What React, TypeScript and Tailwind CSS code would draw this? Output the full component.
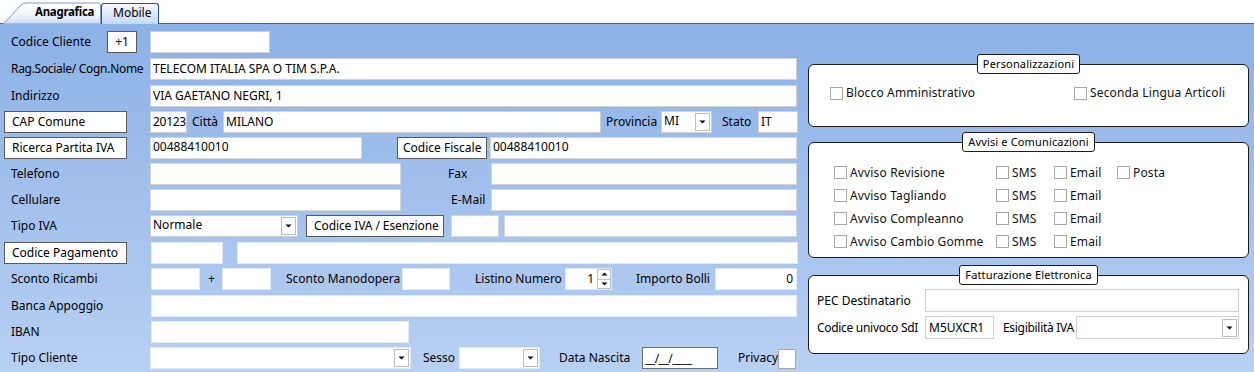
import React from 'react';

const FONT = "font-['Noto_Sans','Liberation_Sans',sans-serif]";

const Arrow = () => (
  <svg width="7" height="4" viewBox="0 0 7 4">
    <path d="M0.5 0.5h6L3.5 3.5z" fill="#000" />
  </svg>
);

const DropBtn = () => (
  <div className="w-[15px] h-[18px] border border-[#bdbdbd] bg-white flex items-center justify-center mr-[1px]">
    <Arrow />
  </div>
);

const Btn: React.FC<{ className: string; children: React.ReactNode }> = ({ className, children }) => (
  <div className={`h-[22px] bg-white border border-[#5a5a5a] flex items-center text-black ${className}`}>
    {children}
  </div>
);

const Box: React.FC<{ className: string; children?: React.ReactNode }> = ({ className, children }) => (
  <div className={`h-[22px] bg-white border flex items-center px-[2px] text-black ${className}`}>
    {children}
  </div>
);

const Select: React.FC<{ className: string; value?: string }> = ({ className, value }) => (
  <div className={`h-[22px] bg-white border border-[#d0d0d0] flex items-center justify-between pl-[2px] ${className}`}>
    <span className="-mt-[3px]">{value}</span>
    <DropBtn />
  </div>
);

const Check: React.FC<{ className?: string }> = ({ className }) => (
  <div className={`w-[13px] h-[13px] border border-[#a6a6a6] bg-white shrink-0 ${className ?? ''}`} />
);

const Label: React.FC<{ children: React.ReactNode; className?: string }> = ({ children, className }) => (
  <div className={`w-[150px] pl-[11px] whitespace-nowrap ${className ?? ''}`}>{children}</div>
);

const Legend: React.FC<{ children: React.ReactNode }> = ({ children }) => (
  <div className="self-center relative z-10 h-[20px] px-[5px] flex items-center bg-white border border-[#1c1c1c] rounded-[3px] whitespace-nowrap text-[11px] text-black">
    {children}
  </div>
);

const Tabs = () => (
  <div className="h-[24px] bg-white border-b border-[#3c629c] flex items-end">
    <div className="relative w-[99px] h-[24px] -mb-[1px] ml-[2px]">
      <svg className="absolute inset-0" width="99" height="24" viewBox="0 0 99 24">
        <defs>
          <linearGradient id="selTab" x1="0" y1="0" x2="0" y2="1">
            <stop offset="0" stopColor="#ffffff" />
            <stop offset="0.55" stopColor="#f3f7fd" />
            <stop offset="1" stopColor="#c6d9f3" />
          </linearGradient>
        </defs>
        <path d="M0.5 24 C8 18 14 10 19 5 Q21.5 3 24 3 H96 Q98.5 3 98.5 5.5 V24 Z" fill="url(#selTab)" stroke="#7f9cc6" strokeWidth="1" />
      </svg>
      <div className="relative h-full pl-[33px] pt-[4px] font-bold text-black text-[11.5px] tracking-[-0.3px]">Anagrafica</div>
    </div>
    <div className="h-[21px] w-[58px] -mb-[1px] border border-b-0 border-[#234f9c] rounded-t-[3px] bg-gradient-to-b from-[#f7fafe] to-[#c4d8f3] pl-[11px] pt-[1px] text-black">
      Mobile
    </div>
  </div>
);

export default function App() {
  return (
    <div className={`w-[1254px] h-[372px] overflow-hidden text-[12px] leading-[16px] ${FONT}`}>
      <Tabs />
      <div className="h-[348px] bg-gradient-to-b from-[#8cb1e6] to-[#b8d0f2] flex">
        {/* left form */}
        <div className="w-[800px] pt-[7px] flex flex-col gap-[4px] text-black">
          <div className="flex items-center h-[22px]">
            <div className="w-[107px] pl-[11px] whitespace-nowrap">Codice Cliente</div>
            <Btn className="w-[30px] justify-center">+1</Btn>
            <Box className="ml-[13px] w-[120px] border-[#d0d0d0]" />
          </div>
          <div className="flex items-center h-[22px] mt-[1px]">
            <Label className="tracking-[-0.3px]">Rag.Sociale/ Cogn.Nome</Label>
            <Box className="w-[647px] border-[#d0d0d0]">TELECOM ITALIA SPA O TIM S.P.A.</Box>
          </div>
          <div className="flex items-center h-[22px] mt-[1px]">
            <Label>Indirizzo</Label>
            <Box className="w-[647px] border-[#d0d0d0]">VIA GAETANO NEGRI, 1</Box>
          </div>
          <div className="flex items-center h-[22px]">
            <Btn className="ml-[4px] w-[123px] pl-[7px]">CAP Comune</Btn>
            <Box className="ml-[23px] w-[37px] border-[#d0d0d0] tracking-[-0.3px]">20123</Box>
            <div className="ml-[5px] w-[31px]">Città</div>
            <Box className="w-[378px] border-[#d0d0d0]">MILANO</Box>
            <div className="ml-[5px] w-[55px]">Provincia</div>
            <Select className="w-[51px]" value="MI" />
            <div className="ml-[10px] w-[36px]">Stato</div>
            <Box className="w-[40px] border-[#d0d0d0]">IT</Box>
          </div>
          <div className="flex items-center h-[22px]">
            <Btn className="ml-[4px] w-[123px] pl-[7px]">Ricerca Partita IVA</Btn>
            <Box className="ml-[23px] w-[212px] border-[#d6d6d6] items-start pt-[1px]">00488410010</Box>
            <Btn className="ml-[35px] w-[90px] pl-[5px]">Codice Fiscale</Btn>
            <Box className="ml-[3px] w-[307px] border-[#d6d6d6] items-start pt-[1px]">00488410010</Box>
          </div>
          <div className="flex items-center h-[22px]">
            <Label>Telefono</Label>
            <Box className="w-[251px] border-[#d6d6d6]" />
            <div className="w-[90px] pl-[47px]">Fax</div>
            <Box className="w-[306px] border-[#d6d6d6]" />
          </div>
          <div className="flex items-center h-[22px]">
            <Label>Cellulare</Label>
            <Box className="w-[251px] border-[#d6d6d6]" />
            <div className="w-[90px] pl-[50px]">E-Mail</div>
            <Box className="w-[306px] border-[#d6d6d6]" />
          </div>
          <div className="flex items-center h-[22px]">
            <Label>Tipo IVA</Label>
            <Select className="w-[148px]" value="Normale" />
            <Btn className="ml-[8px] w-[138px] pl-[7px] tracking-[-0.1px]">Codice IVA / Esenzione</Btn>
            <Box className="ml-[7px] w-[48px] border-[#d6d6d6]" />
            <Box className="ml-[5px] w-[293px] border-[#d6d6d6]" />
          </div>
          <div className="flex items-center h-[22px] mt-[1px]">
            <Btn className="ml-[4px] w-[123px] pl-[7px]">Codice Pagamento</Btn>
            <Box className="ml-[24px] w-[72px] border-[#e1eaf8]" />
            <Box className="ml-[14px] w-[561px] border-[#e1eaf8]" />
          </div>
          <div className="flex items-center h-[22px]">
            <Label>Sconto Ricambi</Label>
            <Box className="ml-[1px] w-[49px] border-[#e1eaf8]" />
            <div className="ml-[8px] w-[14px]">+</div>
            <Box className="w-[49px] border-[#e1eaf8]" />
            <div className="ml-[15px] w-[116px] whitespace-nowrap">Sconto Manodopera</div>
            <Box className="w-[48px] border-[#e1eaf8]" />
            <div className="ml-[25px] w-[90px] whitespace-nowrap">Listino Numero</div>
            <div className="w-[47px] h-[22px] bg-white border border-[#e1eaf8] flex items-center justify-end">
              <span className="mr-[3px]">1</span>
              <div className="w-[14px] h-[20px] flex flex-col border border-[#bdbdbd]">
                <div className="flex-1 flex items-center justify-center border-b border-[#bdbdbd]">
                  <svg width="7" height="4" viewBox="0 0 7 4"><path d="M0.5 3.5h6L3.5 0.5z" fill="#000" /></svg>
                </div>
                <div className="flex-1 flex items-center justify-center">
                  <Arrow />
                </div>
              </div>
            </div>
            <div className="ml-[24px] w-[79px] whitespace-nowrap">Importo Bolli</div>
            <Box className="w-[82px] border-[#e1eaf8] justify-end pr-[3px]">0</Box>
          </div>
          <div className="flex items-center h-[22px] mt-[1px]">
            <Label>Banca Appoggio</Label>
            <Box className="ml-[1px] w-[646px] border-[#e1eaf8]" />
          </div>
          <div className="flex items-center h-[22px]">
            <Label>IBAN</Label>
            <Box className="ml-[1px] w-[258px] border-[#e1eaf8]" />
          </div>
          <div className="flex items-center h-[22px]">
            <Label>Tipo Cliente</Label>
            <Select className="w-[261px] border-[#e1eaf8]" />
            <div className="ml-[12px] w-[36px]">Sesso</div>
            <Select className="w-[81px] border-[#e1eaf8]" />
            <div className="ml-[19px] w-[83px] whitespace-nowrap">Data Nascita</div>
            <div className="w-[76px] h-[22px] bg-white border border-[#6e6e6e] flex items-center pl-[2px] pt-[2px] tracking-[-0.5px]">
              __/__/____
            </div>
            <div className="ml-[20px] w-[40px]">Privacy</div>
            <div className="w-[18px] h-[20px] bg-white border border-[#a6a6a6] mt-[1px]" />
          </div>
        </div>

        {/* right panels */}
        <div className="ml-[8px] w-[441px] pt-[30px] flex flex-col text-[#111] tracking-[0.15px]">
          <Legend>Personalizzazioni</Legend>
          <div className="-mt-[10px] h-[63px] bg-white border border-[#1c1c1c] rounded-[6px] pl-[21px] pt-[18px]">
            <div className="flex items-center h-[20px]">
              <div className="w-[244px] flex items-center">
                <Check />
                <span className="ml-[3px] whitespace-nowrap">Blocco Amministrativo</span>
              </div>
              <div className="flex items-center">
                <Check />
                <span className="ml-[3px] whitespace-nowrap">Seconda Lingua Articoli</span>
              </div>
            </div>
          </div>

          <div className="mt-[5px] flex flex-col">
            <Legend>Avvisi e Comunicazioni</Legend>
            <div className="-mt-[10px] h-[116px] bg-white border border-[#1c1c1c] rounded-[6px] pl-[25px] pt-[18px]">
              {['Avviso Revisione', 'Avviso Tagliando', 'Avviso Compleanno', 'Avviso Cambio Gomme'].map((t, i) => (
                <div key={t} className="flex items-center h-[23px]">
                  <div className="w-[162px] flex items-center">
                    <Check />
                    <span className="ml-[3px] whitespace-nowrap">{t}</span>
                  </div>
                  <div className="w-[58px] flex items-center">
                    <Check />
                    <span className="ml-[3px]">SMS</span>
                  </div>
                  <div className="w-[63px] flex items-center">
                    <Check />
                    <span className="ml-[3px]">Email</span>
                  </div>
                  {i === 0 && (
                    <div className="flex items-center">
                      <Check />
                      <span className="ml-[3px]">Posta</span>
                    </div>
                  )}
                </div>
              ))}
            </div>
          </div>

          <div className="mt-[7px] flex flex-col">
            <Legend>Fatturazione Elettronica</Legend>
            <div className="-mt-[10px] h-[79px] bg-white border border-[#1c1c1c] rounded-[6px] pl-[8px] pt-[13px] flex flex-col gap-[4px] text-black tracking-normal">
              <div className="flex items-center h-[23px]">
                <div className="w-[108px] whitespace-nowrap">PEC Destinatario</div>
                <div className="w-[314px] h-[23px] border border-[#cfcfcf] bg-white" />
              </div>
              <div className="flex items-center h-[23px]">
                <div className="w-[108px] whitespace-nowrap tracking-[-0.3px]">Codice univoco SdI</div>
                <div className="w-[69px] h-[23px] border border-[#cfcfcf] bg-white flex items-center pl-[3px]">M5UXCR1</div>
                <div className="ml-[9px] w-[73px] whitespace-nowrap tracking-[-0.3px]">Esigibilità IVA</div>
                <div className="w-[163px] h-[23px] border border-[#cfcfcf] bg-white flex items-center justify-end">
                  <DropBtn />
                </div>
              </div>
            </div>
          </div>
        </div>
      </div>
    </div>
  );
}
